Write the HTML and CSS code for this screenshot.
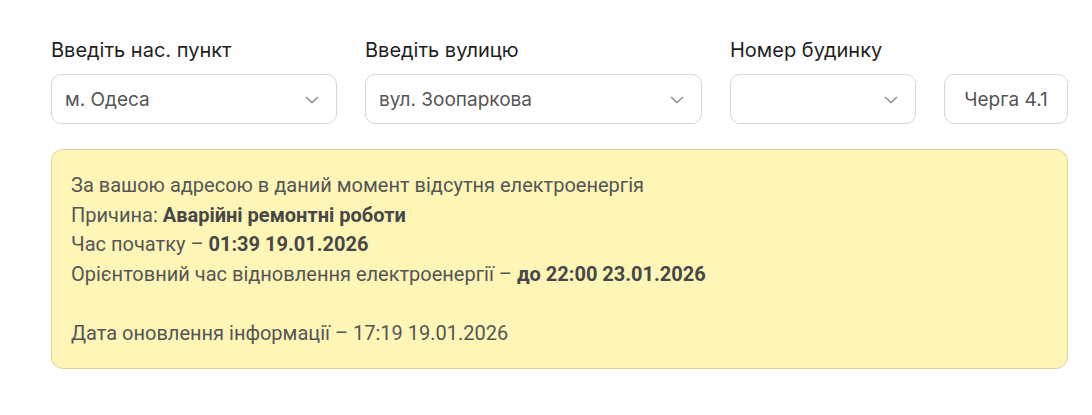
FILE: index.html
```html
<!DOCTYPE html>
<html lang="uk">
<head>
<meta charset="utf-8">
<link rel="stylesheet" href="styles.css">
</head>
<body>
<div class="page">
  <div class="filters">
    <div class="field f-city">
      <div class="label">Введіть нас. пункт</div>
      <div class="select"><span class="value">м. Одеса</span><svg class="chev" width="14" height="8" viewBox="0 0 14 8"><path d="M1 1l6 5.5L13 1" fill="none" stroke="#8a8a8a" stroke-width="1.4"/></svg></div>
    </div>
    <div class="field f-street">
      <div class="label">Введіть вулицю</div>
      <div class="select"><span class="value">вул. Зоопаркова</span><svg class="chev" width="14" height="8" viewBox="0 0 14 8"><path d="M1 1l6 5.5L13 1" fill="none" stroke="#8a8a8a" stroke-width="1.4"/></svg></div>
    </div>
    <div class="field f-house">
      <div class="label">Номер будинку</div>
      <div class="select"><span class="value"></span><svg class="chev" width="14" height="8" viewBox="0 0 14 8"><path d="M1 1l6 5.5L13 1" fill="none" stroke="#8a8a8a" stroke-width="1.4"/></svg></div>
    </div>
    <div class="field f-queue">
      <div class="label">&nbsp;</div>
      <div class="queue">Черга 4.1</div>
    </div>
  </div>
  <div class="info">
    <p>За вашою адресою в даний момент відсутня електроенергія</p>
    <p>Причина: <b>Аварійні ремонтні роботи</b></p>
    <p>Час початку – <b>01:39 19.01.2026</b></p>
    <p>Орієнтовний час відновлення електроенергії – <b>до 22:00 23.01.2026</b></p>
    <p>&nbsp;</p>
    <p>Дата оновлення інформації – 17:19 19.01.2026</p>
  </div>
</div>
</body>
</html>
```

FILE: styles.css
```css
html, body {
  margin: 0;
  padding: 0;
  background: #ffffff;
}
.page {
  padding: 36px 24px 0 51px;
  font-family: Inter, "Noto Sans", sans-serif;
}
.filters {
  display: flex;
  gap: 28px;
  width: 1017px;
}
.field {
  display: flex;
  flex-direction: column;
}
.f-city { width: 286px; }
.f-street { width: 337px; }
.f-house { width: 186px; }
.f-queue { width: 124px; }
.label {
  font-size: 20px;
  line-height: 28px;
  color: #1f1f1f;
  height: 28px;
  margin-bottom: 10px;
}
.select, .queue {
  box-sizing: border-box;
  height: 50px;
  border: 1px solid #d6d6d6;
  border-radius: 10px;
  display: flex;
  align-items: center;
  font-size: 19px;
  color: #555555;
}
.select {
  justify-content: space-between;
  padding: 0 17px 0 13px;
}
.queue {
  justify-content: center;
}
.chev {
  display: block;
  margin-top: 1px;
}
.info {
  box-sizing: border-box;
  width: 1017px;
  margin-top: 25px;
  background: #fef6b7;
  border: 1px solid #dcd4a4;
  border-radius: 12px;
  padding: 21px 19px 19px;
  font-family: Roboto, "Liberation Sans", sans-serif;
  font-size: 20px;
  color: #555555;
}
.info p {
  margin: 0;
  line-height: 29.6px;
}
.info b {
  font-weight: 700;
  color: #474747;
}
```
